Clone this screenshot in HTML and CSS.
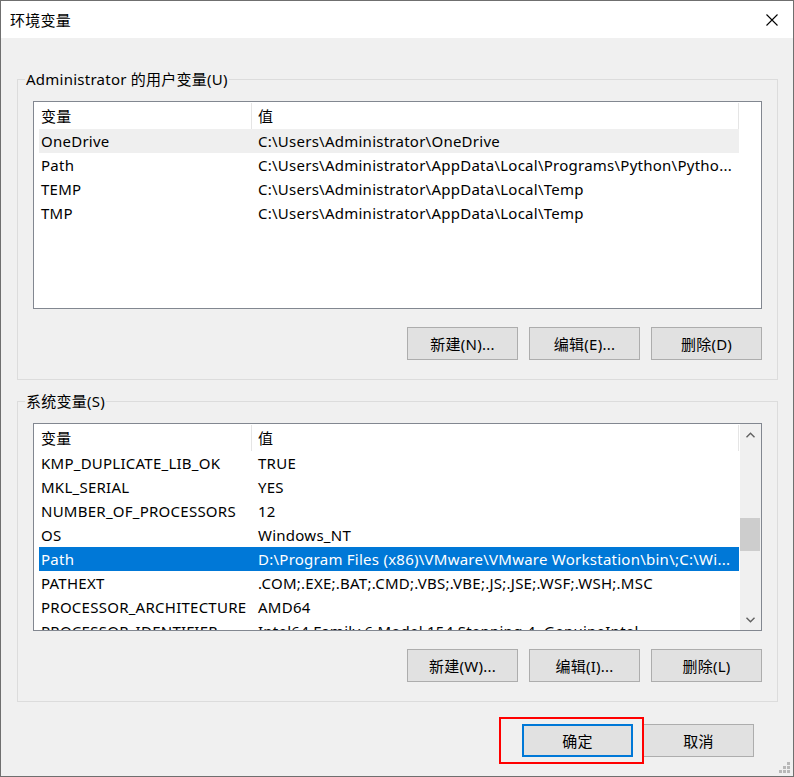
FILE: index.html
```html
<!DOCTYPE html>
<html lang="zh-CN">
	<head>
		<meta charset="UTF-8">
		<title>环境变量</title>
		<link rel="stylesheet" href="styles.css">
	</head>
	<body>
		<div class="window">
			<div class="titlebar">
				<span class="title">环境变量</span>
				<svg class="close" width="12" height="12" viewBox="0 0 12 12">
					<path d="M0.5 0.5 L11.5 11.5 M11.5 0.5 L0.5 11.5" stroke="#000" stroke-width="1.1" fill="none"/>
				</svg>
			</div>

			<div class="content">
				<!-- variaveis do usuario -->
				<fieldset class="group">
					<legend>Administrator 的用户变量(U)</legend>
					<div class="group-body">
						<div class="list">
							<div class="table">
								<div class="row head">
									<div class="name">变量</div>
									<div class="value">值</div>
								</div>
								<div class="row hover">
									<div class="name">OneDrive</div>
									<div class="value">C:\Users\Administrator\OneDrive</div>
								</div>
								<div class="row">
									<div class="name">Path</div>
									<div class="value">C:\Users\Administrator\AppData\Local\Programs\Python\Pytho...</div>
								</div>
								<div class="row">
									<div class="name">TEMP</div>
									<div class="value">C:\Users\Administrator\AppData\Local\Temp</div>
								</div>
								<div class="row">
									<div class="name">TMP</div>
									<div class="value">C:\Users\Administrator\AppData\Local\Temp</div>
								</div>
							</div>
						</div>
						<div class="buttons">
							<button class="btn">新建(N)...</button>
							<button class="btn">编辑(E)...</button>
							<button class="btn">删除(D)</button>
						</div>
					</div>
				</fieldset>

				<!-- variaveis do sistema -->
				<fieldset class="group">
					<legend>系统变量(S)</legend>
					<div class="group-body">
						<div class="list">
							<div class="table">
								<div class="row head">
									<div class="name">变量</div>
									<div class="value">值</div>
								</div>
								<div class="row">
									<div class="name">KMP_DUPLICATE_LIB_OK</div>
									<div class="value">TRUE</div>
								</div>
								<div class="row">
									<div class="name">MKL_SERIAL</div>
									<div class="value">YES</div>
								</div>
								<div class="row">
									<div class="name">NUMBER_OF_PROCESSORS</div>
									<div class="value">12</div>
								</div>
								<div class="row">
									<div class="name">OS</div>
									<div class="value">Windows_NT</div>
								</div>
								<div class="row selected">
									<div class="name">Path</div>
									<div class="value">D:\Program Files (x86)\VMware\VMware Workstation\bin\;C:\Wi...</div>
								</div>
								<div class="row">
									<div class="name">PATHEXT</div>
									<div class="value">.COM;.EXE;.BAT;.CMD;.VBS;.VBE;.JS;.JSE;.WSF;.WSH;.MSC</div>
								</div>
								<div class="row">
									<div class="name">PROCESSOR_ARCHITECTURE</div>
									<div class="value">AMD64</div>
								</div>
								<div class="row">
									<div class="name">PROCESSOR_IDENTIFIER</div>
									<div class="value">Intel64 Family 6 Model 154 Stepping 4, GenuineIntel</div>
								</div>
							</div>
							<div class="scrollbar">
								<div class="arrow">
									<svg width="9" height="6" viewBox="0 0 9 6"><path d="M0.5 5.2 L4.5 1.2 L8.5 5.2" stroke="#606060" stroke-width="1.4" fill="none"/></svg>
								</div>
								<div class="thumb"></div>
								<div class="arrow down">
									<svg width="9" height="6" viewBox="0 0 9 6"><path d="M0.5 0.8 L4.5 4.8 L8.5 0.8" stroke="#606060" stroke-width="1.4" fill="none"/></svg>
								</div>
							</div>
						</div>
						<div class="buttons">
							<button class="btn">新建(W)...</button>
							<button class="btn">编辑(I)...</button>
							<button class="btn">删除(L)</button>
						</div>
					</div>
				</fieldset>

				<div class="footer">
					<button class="btn default">确定</button>
					<button class="btn">取消</button>
					<div class="mark"></div>
				</div>
			</div>

			<svg class="grip" width="11" height="11" viewBox="0 0 11 11" fill="#b8b8b8">
				<rect x="8" y="0" width="3" height="3"/>
				<rect x="4" y="4" width="3" height="3"/>
				<rect x="8" y="4" width="3" height="3"/>
				<rect x="0" y="8" width="3" height="3"/>
				<rect x="4" y="8" width="3" height="3"/>
				<rect x="8" y="8" width="3" height="3"/>
			</svg>
		</div>
	</body>
</html>
```

FILE: styles.css
```css
* {
	box-sizing: border-box;
}
body {
	margin: 0;
	background: #fff;
	font-family: "Noto Sans", "Noto Sans CJK SC", sans-serif;
	font-size: 15px;
	letter-spacing: 0.25px;
	color: #000;
}
.window {
	width: 794px;
	height: 777px;
	border: 1px solid #6f6f6f;
	background: #f0f0f0;
	position: relative;
	display: flex;
	flex-direction: column;
}
.titlebar {
	height: 37px;
	flex-shrink: 0;
	background: #fff;
	display: flex;
	align-items: center;
	justify-content: space-between;
	padding: 0 15px 0 9px;
}
.title {
	line-height: 20px;
}
.close {
	display: block;
}
.content {
	padding: 31px 15px 0 16px;
	display: flex;
	flex-direction: column;
}
.group {
	margin: 0;
	padding: 11px 0 19px;
	border: 1px solid #dcdcdc;
	min-width: 0;
}
.group + .group {
	margin-top: 11px;
}
.group legend {
	margin-left: 7px;
	padding: 0 1px;
	height: 21px;
	line-height: 21px;
}
.group-body {
	padding: 0 15px;
}
.list {
	height: 208px;
	border: 1px solid #828790;
	background: #fff;
	display: flex;
	overflow: hidden;
}
.table {
	width: 706px;
	flex-shrink: 0;
	padding: 0 1px 0 5px;
	overflow: hidden;
}
.row {
	display: flex;
	height: 24px;
	line-height: 24px;
	white-space: nowrap;
}
.row .name {
	width: 213px;
	padding-left: 2px;
	overflow: hidden;
}
.row .value {
	width: 487px;
	padding-left: 6px;
	overflow: hidden;
}
.row.head {
	height: 27px;
	line-height: 27px;
}
.row.head .name, .row.head .value {
	border-right: 1px solid #e5e5e5;
	margin-top: 1px;
	line-height: 26px;
}
.row.hover {
	background: #efefef;
}
.row.selected {
	background: #0078d7;
	color: #fff;
}
.scrollbar {
	width: 21px;
	background: #f0f0f0;
	display: flex;
	flex-direction: column;
}
.arrow {
	height: 21px;
	display: flex;
	align-items: center;
	justify-content: center;
}
.arrow svg {
	display: block;
}
.arrow.down {
	margin-top: auto;
}
.thumb {
	height: 33px;
	margin: 73px 1px 0 0;
	background: #cdcdcd;
}
.buttons {
	display: flex;
	justify-content: flex-end;
	gap: 11px;
	margin-top: 18px;
}
.btn {
	width: 111px;
	height: 33px;
	padding: 0;
	background: #e1e1e1;
	border: 1px solid #adadad;
	border-radius: 0;
	font: inherit;
	letter-spacing: inherit;
	color: #000;
}
.btn.default {
	border: 2px solid #0078d7;
}
.footer {
	display: flex;
	justify-content: flex-end;
	gap: 10px;
	margin-top: 22px;
	padding-right: 24px;
	position: relative;
}
/* marcacao vermelha por cima do botao */
.mark {
	position: absolute;
	left: 482px;
	top: -7px;
	width: 145px;
	height: 47px;
	border: 2px solid #f00;
}
.grip {
	position: absolute;
	right: 3px;
	bottom: 3px;
}
```
